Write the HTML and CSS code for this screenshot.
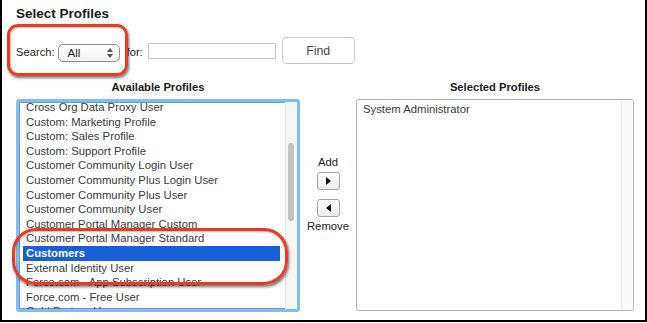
FILE: index.html
```html
<!DOCTYPE html>
<html lang="en">
<head>
    <meta charset="UTF-8">
    <title>Select Profiles</title>
    <link rel="stylesheet" href="styles.css">
</head>
<body>
    <div class="frame">
        <h1 class="title">Select Profiles</h1>

        <div class="search-row">
            <span class="label">Search:</span>
            <div class="select">
                <span>All</span>
                <svg class="select-arrows" width="6" height="10" viewBox="0 0 6 10">
                    <path d="M3 0 L6 4 L0 4 Z" fill="#555"/>
                    <path d="M0 6 L6 6 L3 10 Z" fill="#555"/>
                </svg>
            </div>
            <span class="label for-label">for:</span>
            <div class="text-input"></div>
            <div class="find-btn">Find</div>
            <!-- annotation -->
            <div class="callout callout-search"></div>
        </div>

        <div class="lists">
            <div class="col-head">Available Profiles</div>
            <div></div>
            <div class="col-head">Selected Profiles</div>

            <div class="listbox focused">
                <div class="items">
                    <div class="item">Cross Org Data Proxy User</div>
                    <div class="item">Custom: Marketing Profile</div>
                    <div class="item">Custom: Sales Profile</div>
                    <div class="item">Custom: Support Profile</div>
                    <div class="item">Customer Community Login User</div>
                    <div class="item">Customer Community Plus Login User</div>
                    <div class="item">Customer Community Plus User</div>
                    <div class="item">Customer Community User</div>
                    <div class="item">Customer Portal Manager Custom</div>
                    <div class="item">Customer Portal Manager Standard</div>
                    <div class="item selected">Customers</div>
                    <div class="item">External Identity User</div>
                    <div class="item">Force.com - App Subscription User</div>
                    <div class="item">Force.com - Free User</div>
                    <div class="item">Gold Partner User</div>
                </div>
                <div class="scroll-track">
                    <div class="scroll-thumb"></div>
                </div>
            </div>

            <div class="mover">
                <span>Add</span>
                <div class="arrow-btn">
                    <svg width="5" height="8" viewBox="0 0 5 8"><path d="M0 0 L5 4 L0 8 Z" fill="#111"/></svg>
                </div>
                <div class="arrow-btn">
                    <svg width="5" height="8" viewBox="0 0 5 8"><path d="M5 0 L0 4 L5 8 Z" fill="#111"/></svg>
                </div>
                <span>Remove</span>
            </div>

            <div class="listbox plain">
                <div class="items">
                    <div class="item">System Administrator</div>
                </div>
                <div class="scroll-track light"></div>
            </div>

            <!-- annotation -->
            <div class="callout callout-list"></div>
        </div>
    </div>
</body>
</html>
```

FILE: styles.css
```css
body {
    margin: 0;
    background-color: #fff;
    font-family: "Liberation Sans", Arial, sans-serif;
    color: #333;
}

.frame {
    width: 647px;
    height: 322px;
    box-sizing: border-box;
    border: 2px solid #000;
    border-top: none;
    padding: 6px 11px 0 14px;
}

.title {
    margin: 0;
    font-size: 13.5px;
    line-height: 16px;
    font-weight: bold;
    color: #1a1a1a;
}

.search-row {
    position: relative;
    display: flex;
    align-items: center;
    height: 27px;
    margin-top: 15px;
    font-size: 11.2px;
    color: #222;
}

.label {
    line-height: 14px;
    margin-top: 3px;
}

.select {
    display: flex;
    align-items: center;
    justify-content: space-between;
    box-sizing: border-box;
    width: 62px;
    height: 18px;
    margin: 5px 0 0 3px;
    padding: 0 6px 0 9px;
    border: 1px solid #8e8e8e;
    border-radius: 5px;
    background: linear-gradient(#fff, #f1f1f1);
    font-size: 11.5px;
}

.for-label {
    margin-left: 7px;
}

.text-input {
    width: 128px;
    height: 16px;
    box-sizing: border-box;
    margin-left: 5px;
    border: 1px solid #c4c4c4;
    background-color: #fff;
}

.find-btn {
    display: flex;
    align-items: center;
    justify-content: center;
    box-sizing: border-box;
    width: 73px;
    height: 27px;
    margin-left: 6px;
    border: 1px solid #c9c9c9;
    border-radius: 4px;
    background-color: #fff;
    font-size: 12.3px;
    color: #3e4a5e;
}

.callout {
    position: absolute;
    box-sizing: border-box;
    border: 3px solid #ea3a22;
    box-shadow: 1px 2px 3px rgba(0, 0, 0, 0.55), inset 1px 1px 2px rgba(0, 0, 0, 0.25);
    pointer-events: none;
}

.callout-search {
    left: -9px;
    top: -13px;
    width: 121px;
    height: 52px;
    border-radius: 11px;
}

.lists {
    position: relative;
    display: grid;
    grid-template-columns: 284px 56px 278px;
    grid-template-rows: 14px 213px;
    row-gap: 5px;
    margin-top: 16px;
}

.col-head {
    text-align: center;
    font-size: 11.2px;
    line-height: 14px;
    font-weight: bold;
    color: #1a1a1a;
}

.listbox {
    position: relative;
    box-sizing: border-box;
    overflow: hidden;
    background-color: #fff;
    font-size: 11.3px;
    color: #3a3a3a;
}

.listbox.focused {
    border: 3px solid #86bbf0;
    border-radius: 3px;
    box-shadow: inset 0 0 0 1px #5d9ee6;
}

.listbox.focused .items {
    margin: -2px 0 0 4px;
    width: 257px;
}

.listbox.plain {
    height: 212px;
    border: 1px solid #b3b3b3;
    border-radius: 3px;
}

.listbox.plain .items {
    padding: 2px 0 0 3px;
}

.item {
    padding-left: 3px;
    line-height: 14.6px;
    white-space: nowrap;
}

.item.selected {
    background-color: #1760d6;
    color: #fff;
    font-weight: bold;
}

.scroll-track {
    position: absolute;
    top: 0;
    right: 0;
    bottom: 0;
    width: 11px;
    background-color: #f6f6f6;
    border-left: 1px solid #e6e6e6;
}

.scroll-track.light {
    background-color: #fafafa;
    border-left-color: #ececec;
}

.scroll-thumb {
    margin: 41px 0 0 2px;
    width: 6px;
    height: 78px;
    border-radius: 3px;
    background-color: #c2c2c2;
}

.mover {
    display: flex;
    flex-direction: column;
    align-items: center;
    padding-top: 56px;
    font-size: 11.3px;
    line-height: 14px;
    color: #222;
}

.arrow-btn {
    display: flex;
    align-items: center;
    justify-content: center;
    box-sizing: border-box;
    width: 23px;
    height: 18px;
    margin-top: 3px;
    border: 1px solid #a4a4a4;
    border-radius: 3px;
    background: linear-gradient(#fff, #ededed);
}

.arrow-btn + .arrow-btn {
    margin-top: 9px;
    margin-bottom: 2px;
}

.callout-list {
    left: -4px;
    top: 148px;
    width: 276px;
    height: 57px;
    border-radius: 24px;
}
```
